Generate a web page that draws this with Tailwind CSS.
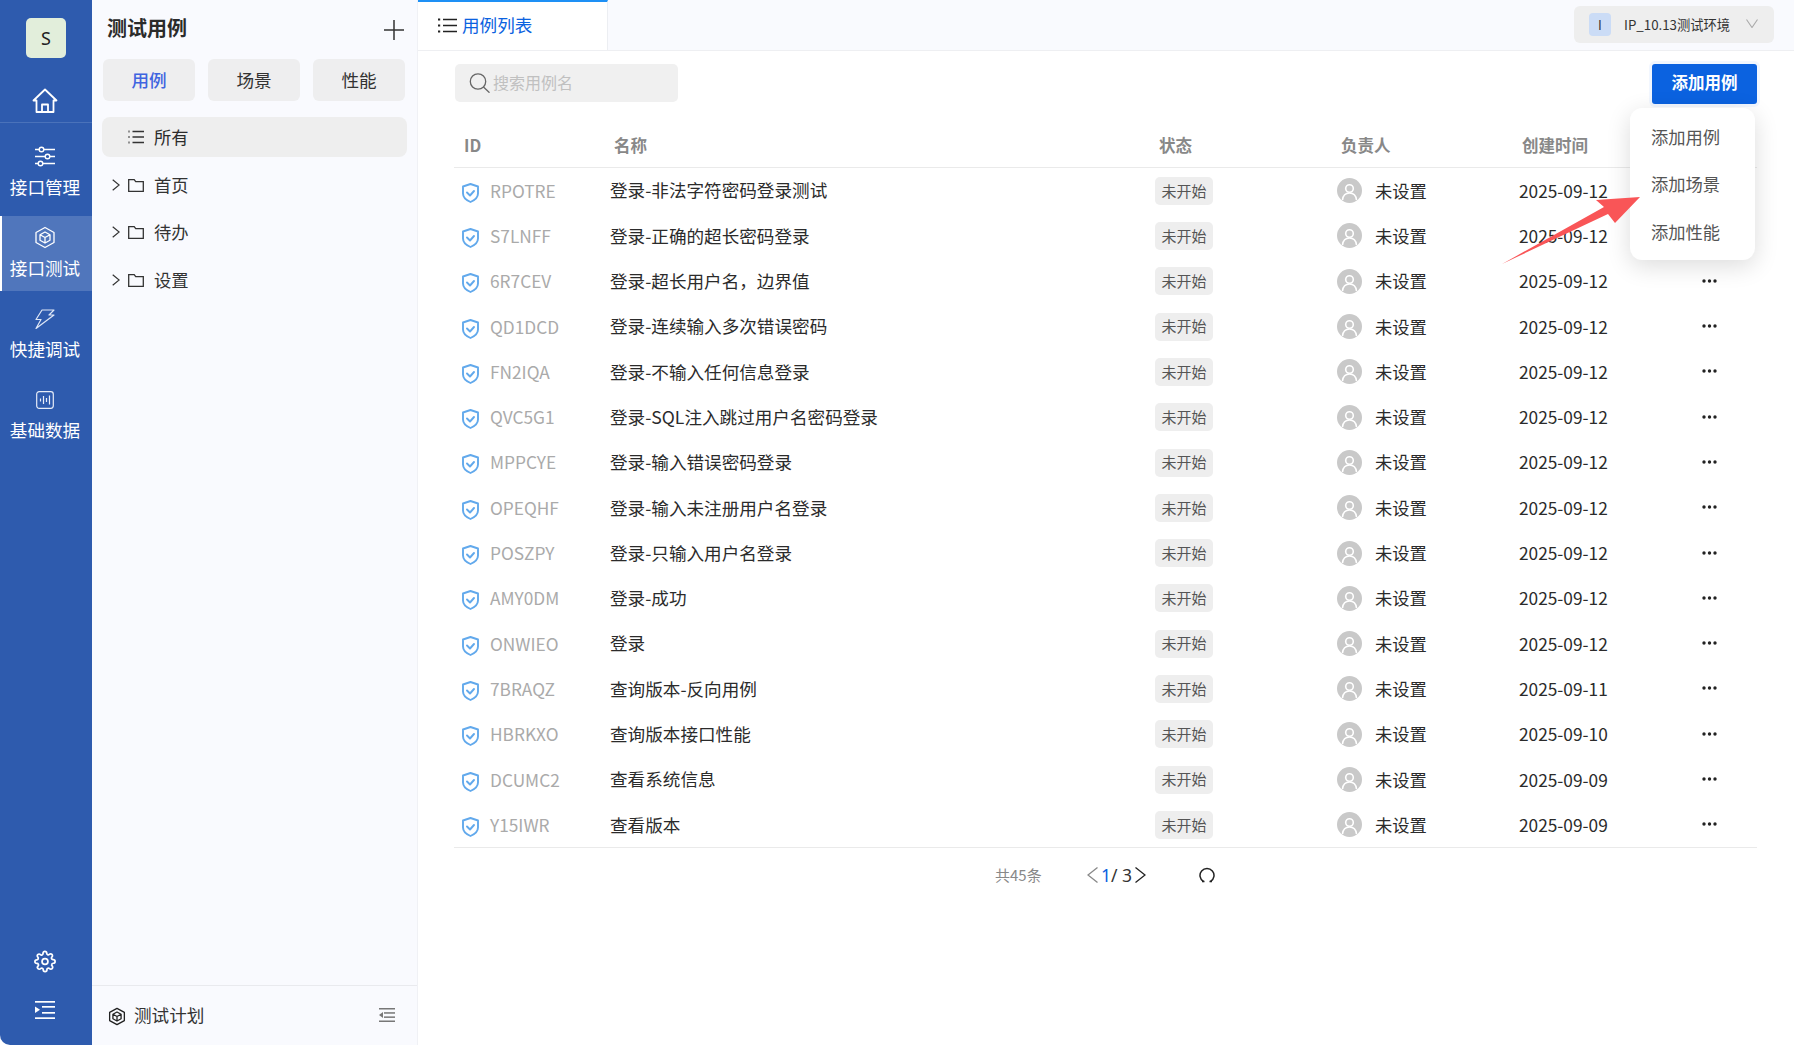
<!DOCTYPE html>
<html lang="zh-CN">
<head>
  <meta charset="UTF-8" />
  <title>测试用例</title>
  <script src="https://cdn.jsdelivr.net/npm/@tailwindcss/browser@4"></script>
</head>
<body class="bg-[#9a9a9a] h-[1045px] w-[1794px] overflow-hidden [font-family:'Noto_Sans_CJK_SC','Noto_Sans',sans-serif]">
  <div class="relative flex h-full w-full bg-white">

    <!-- left nav -->
    <aside class="w-[92px] h-full bg-[#2e5bae] rounded-bl-[10px] flex flex-col text-white text-[17.6px] shrink-0">
      <div class="pt-[18px] pb-[30px] flex justify-center">
        <div class="w-10 h-10 rounded-[5px] bg-[#e2eedb] text-[#222] flex items-center justify-center text-[18px] [font-family:'Noto_Sans',sans-serif]">S</div>
      </div>
      <div class="h-[34px] flex justify-center pr-[2px]">
        <svg class="w-[26px] h-[25px]" viewBox="0 0 26 25" fill="none" stroke="#fff" stroke-width="1.8" stroke-linejoin="round" stroke-linecap="round"><path d="M1.500 12.500 13 1.500l11.500 11h-3V24h-17V12.500z"/><path d="M10 24v-7.500h6V24"/></svg>
      </div>
      <div class="h-px bg-[#4a72ba]"></div>
      <div class="h-[93px] pt-[23px] pr-[2px] flex flex-col items-center">
        <svg class="w-[22px] h-[21px]" viewBox="0 0 22 21" fill="none" stroke="#fff" stroke-width="1.4"><path d="M1 3.500h4M10 3.500h11M1 10.500h10M16 10.500h5M1 17.500h3M9 17.500h12"/><circle cx="7.500" cy="3.500" r="2.300"/><circle cx="13.500" cy="10.500" r="2.300"/><circle cx="6.500" cy="17.500" r="2.300"/></svg>
        <span class="mt-[7px] leading-[26px]">接口管理</span>
      </div>
      <div class="h-[75px] ml-[2px] pr-[4px] bg-[#5076bc] flex flex-col items-center pt-[10px]">
        <svg class="w-[22px] h-[23px]" viewBox="0 0 22 23" fill="none" stroke="#fff" stroke-width="1.3" stroke-linejoin="round"><path d="M11 1.500 20 6.500v10l-9 5-9-5v-10z"/><path d="M11 6l5 2.700v5.600l-5 2.700-5-2.700V8.700zM6 8.700l5 2.800 5-2.800M11 11.500V17"/></svg>
        <span class="mt-[6px] leading-[26px]">接口测试</span>
      </div>
      <div class="h-[81px] pt-[18px] pr-[2px] flex flex-col items-center">
        <svg class="w-[20px] h-[20px]" viewBox="0 0 20 20" fill="none" stroke="#dfe7f6" stroke-width="1.2" stroke-linejoin="round"><path d="M7 1h12l-5 5h5L1 19.500 6 10.500H1z"/></svg>
        <span class="mt-[7px] leading-[26px]">快捷调试</span>
      </div>
      <div class="h-[81px] pt-[19px] pr-[2px] flex flex-col items-center">
        <svg class="w-[18px] h-[18px]" viewBox="0 0 18 18" fill="none" stroke="#e6ecf8" stroke-width="1.2"><rect x=".7" y=".7" width="16.600" height="16.600" rx="2.500"/><path d="M4.500 7.500v3M7.500 5v8M10.500 7v4M13.500 4.500v9"/></svg>
        <span class="mt-[8px] leading-[26px]">基础数据</span>
      </div>
      <div class="mt-auto flex flex-col items-center pb-[26px] pr-[2px]">
        <svg class="w-[22px] h-[23px]" viewBox="0 0 24 24" fill="none" stroke="#fff" stroke-width="1.9" stroke-linejoin="round"><circle cx="12" cy="12" r="3.200"/><path d="M19.400 15a1.650 1.650 0 0 0 .33 1.820l.06.06a2 2 0 1 1-2.830 2.830l-.06-.06a1.650 1.650 0 0 0-2.820 1.170V21a2 2 0 0 1-4 0v-.09a1.650 1.650 0 0 0-2.820-1.110l-.06.06a2 2 0 1 1-2.830-2.830l.06-.06a1.650 1.650 0 0 0-1.170-2.820H3a2 2 0 0 1 0-4h.09A1.650 1.650 0 0 0 4.200 7.330l-.06-.06a2 2 0 1 1 2.830-2.830l.06.06A1.650 1.650 0 0 0 9.850 3.330V3a2 2 0 0 1 4 0v.09a1.650 1.650 0 0 0 2.820 1.170l.06-.06a2 2 0 1 1 2.830 2.830l-.06.06a1.650 1.650 0 0 0 1.170 2.820H21a2 2 0 0 1 0 4h-.09A1.650 1.650 0 0 0 19.400 15z"/></svg>
        <svg class="w-[20px] h-[18px] mt-[28px]" viewBox="0 0 20 18" fill="#fff"><rect width="20" height="1.700"/><rect x="7" y="5" width="13" height="1.700"/><rect x="7" y="11" width="13" height="1.700"/><rect y="16.300" width="20" height="1.700"/><path d="M0 5.500 5 8.800 0 12z"/></svg>
      </div>
    </aside>
    <div class="absolute left-0 top-[216px] w-[2px] h-[75px] bg-white"></div>

    <!-- case tree -->
    <section class="w-[326px] h-full bg-[#f9fafe] border-r border-[#f0f1f5] flex flex-col shrink-0 text-[#333]">
      <div class="h-[59px] pl-[15px] pr-[13px] flex items-start justify-between">
        <h1 class="text-[20px] font-bold leading-[28px] mt-[14px] text-[#2b2b2b]">测试用例</h1>
        <svg class="w-[20px] h-[20px] mt-[20px]" viewBox="0 0 20 20" stroke="#333" stroke-width="1.500"><path d="M10 0v20M0 10h20"/></svg>
      </div>
      <div class="pl-[11px] flex gap-[13px] text-[17.6px]">
        <div class="w-[92px] h-[42px] rounded-[6px] bg-[#eeeeef] flex items-center justify-center text-[#3f65e0] font-medium">用例</div>
        <div class="w-[92px] h-[42px] rounded-[6px] bg-[#eeeeef] flex items-center justify-center">场景</div>
        <div class="w-[92px] h-[42px] rounded-[6px] bg-[#eeeeef] flex items-center justify-center">性能</div>
      </div>
      <nav class="mt-4 text-[17.3px]">
        <div class="ml-[10px] w-[305px] h-10 rounded-[8px] bg-[#eeeeee] flex items-center pl-[26px] gap-[10px]">
          <svg class="w-[16px] h-[14px]" viewBox="0 0 16 14" stroke="#333" stroke-width="1.300" fill="#333"><path d="M4.500 1.500H16M4.500 7H16M4.500 12.500H16"/><path d="M.5 1.500h1M.5 7h1M.5 12.500h1" stroke-width="1.800"/></svg>
          <span class="text-[#2b2b2b]">所有</span>
        </div>
        <div class="mt-[4px] ml-[20px] h-[47px] flex items-center gap-[8px]">
          <svg class="w-[8px] h-[12px]" viewBox="0 0 8 12" fill="none" stroke="#333" stroke-width="1.200"><path d="m.7.700 6.500 5.300L.7 11.300"/></svg>
          <svg class="w-[16px] h-[13px] mt-[1px]" viewBox="0 0 16 13" fill="none" stroke="#333" stroke-width="1.300"><path d="M.7.700h5.500l1.500 2h7.600v9.600H.7z"/></svg>
          <span class="ml-[2px]">首页</span>
        </div>
        <div class="ml-[20px] h-[47px] flex items-center gap-[8px]">
          <svg class="w-[8px] h-[12px]" viewBox="0 0 8 12" fill="none" stroke="#333" stroke-width="1.200"><path d="m.7.700 6.500 5.300L.7 11.300"/></svg>
          <svg class="w-[16px] h-[13px] mt-[1px]" viewBox="0 0 16 13" fill="none" stroke="#333" stroke-width="1.300"><path d="M.7.700h5.500l1.500 2h7.600v9.600H.7z"/></svg>
          <span class="ml-[2px]">待办</span>
        </div>
        <div class="mt-[1px] ml-[20px] h-[47px] flex items-center gap-[8px]">
          <svg class="w-[8px] h-[12px]" viewBox="0 0 8 12" fill="none" stroke="#333" stroke-width="1.200"><path d="m.7.700 6.500 5.300L.7 11.300"/></svg>
          <svg class="w-[16px] h-[13px] mt-[1px]" viewBox="0 0 16 13" fill="none" stroke="#333" stroke-width="1.300"><path d="M.7.700h5.500l1.500 2h7.600v9.600H.7z"/></svg>
          <span class="ml-[2px]">设置</span>
        </div>
      </nav>
      <div class="mt-auto h-[60px] border-t border-[#e9eaee] pl-[16px] pr-[22px] flex items-center justify-between">
        <div class="flex items-center gap-[8px]">
          <svg class="w-[18px] h-[19px] mt-[3px]" viewBox="0 0 22 23" fill="none" stroke="#222" stroke-width="1.600" stroke-linejoin="round"><path d="M11 1.500 20 6.500v10l-9 5-9-5v-10z"/><path d="M11 6l5 2.700v5.600l-5 2.700-5-2.700V8.700zM6 8.700l5 2.800 5-2.800M11 11.500V17"/></svg>
          <span class="text-[17.6px]">测试计划</span>
        </div>
        <svg class="w-[16px] h-[14px] -mt-[2px]" viewBox="0 0 16 14" fill="#777"><rect width="16" height="1.500"/><rect x="5" y="4.200" width="11" height="1.500"/><rect x="5" y="8.400" width="11" height="1.500"/><rect y="12.500" width="16" height="1.500"/><path d="M4 4 0 7l4 3z"/></svg>
      </div>
    </section>

    <!-- main -->
    <main class="flex-1 flex flex-col min-w-0">
      <header class="h-[51px] bg-[#f9fafe] border-b border-[#eeeff2] flex justify-between shrink-0">
        <div class="w-[190px] h-[50px] bg-white border-t-2 border-[#1e90f5] border-r border-r-[#eceef2] flex items-center pl-5 pb-[2px] gap-[5px] text-[#0b62e0] text-[17.6px]">
          <svg class="w-[19px] h-[15px]" viewBox="0 0 19 15" stroke="#222" stroke-width="1.500" fill="none"><path d="M5 1.500h14M5 7.500h14M5 13.500h14"/><path d="M0 1.500h2.200M0 7.500h2.200M0 13.500h2.200" stroke-width="2"/></svg>
          <span>用例列表</span>
        </div>
        <div class="w-[200px] h-[37px] mt-[6px] mr-[20px] rounded-[6px] bg-[#eeeeee] flex items-center pl-[15px] text-[#333]">
          <div class="w-[22px] h-[23px] rounded-[4px] bg-[#cbdcf6] flex items-center justify-center text-[13px] text-[#333]">I</div>
          <span class="ml-[13px] w-[122px] whitespace-nowrap text-[13.3px]">IP_10.13测试环境</span>
          <svg class="w-[12px] h-[9px] -mt-[2px]" viewBox="0 0 12 9" fill="none" stroke="#aaa" stroke-width="1.100"><path d="m.5.500 5.500 8 5.500-8"/></svg>
        </div>
      </header>

      <div class="pl-[36px] pr-[37px] flex-1 flex flex-col">
        <div class="flex justify-between pt-[13px] h-[52px] shrink-0">
          <div class="w-[223px] h-[38px] rounded-[5px] bg-[#f0f0f0] flex items-center pl-[14px] gap-[3px] ml-[1px] text-[16px] text-[#c0c0c0]">
            <svg class="w-[21px] h-[20px]" viewBox="0 0 21 20" fill="none" stroke="#666" stroke-width="1.300"><circle cx="9" cy="8.500" r="7.700"/><path d="m14.500 14 6 5.700"/></svg>
            <span class="-mt-[2px]">搜索用例名</span>
          </div>
          <button class="w-[105px] h-[40px] pb-[3px] rounded-[3px] bg-[#0b62e0] text-white text-[16.5px] font-bold shadow-[0_0_0_3px_#f2f7ff]">添加用例</button>
        </div>

        <div class="grid grid-cols-[156px_545px_182px_182px_184px_1fr] h-[65px] pt-[20px] items-center border-b border-[#eaeaea] text-[16.5px] font-bold text-[#888] shrink-0">
          <div class="pl-[10px] leading-[26px]">ID</div>
          <div class="pl-[4px]">名称</div>
          <div class="pl-[4px]">状态</div>
          <div class="pl-[4px]">负责人</div>
          <div class="pl-[3px]">创建时间</div>
          <div></div>
        </div>

        <div id="rows" class="border-b border-[#eaeaea]"></div>

        <div class="relative h-[54px] flex items-center text-[#333] [font-family:'Noto_Sans',sans-serif]">
          <span class="ml-[541px] w-[92px] text-[15px] text-[#888] [font-family:'Noto_Sans_CJK_SC',sans-serif]">共45条</span>
          <svg class="w-[11px] h-[16px]" viewBox="0 0 11 16" fill="none" stroke="#888" stroke-width="1.300"><path d="M10.500.5 1 8l9.500 7.500"/></svg>
          <span class="ml-[3px] text-[17.500px] text-[#0b62e0]">1</span>
          <span class="text-[17.500px]">/&nbsp;3</span>
          <svg class="w-[11px] h-[16px] ml-[3px]" viewBox="0 0 11 16" fill="none" stroke="#222" stroke-width="1.300"><path d="M.5.500 10 8 .5 15.500"/></svg>
          <svg class="w-[16px] h-[16px] ml-[53px]" viewBox="0 0 16 16" fill="none" stroke="#222" stroke-width="1.500"><path d="M4.500 14.500a7 7 0 1 1 7 0"/><path d="M3 14.500h2.500M10.500 14.500H13"/></svg>
        </div>
      </div>
    </main>

    <!-- add menu -->
    <div class="absolute left-[1630px] top-[108px] w-[125px] h-[152px] rounded-[12px] bg-white shadow-[0_6px_24px_rgba(0,0,0,0.14)] flex flex-col pt-[5px] pl-[21px] text-[17.3px] text-[#555]">
      <div class="h-[47.500px] flex items-center">添加用例</div>
      <div class="h-[47.500px] flex items-center">添加场景</div>
      <div class="h-[47.500px] flex items-center">添加性能</div>
    </div>

    <!-- annotation arrow -->
    <svg class="absolute left-0 top-0 w-[1794px] h-[1045px] pointer-events-none" viewBox="0 0 1794 1045">
      <path d="M1502 264 1604 207 1596 200 1640 197 1615 223 1608 214z" fill="#f95557"/>
    </svg>
  </div>

  <script>
    const cases = [
      ["RPOTRE", "登录-非法字符密码登录测试", "2025-09-12"],
      ["S7LNFF", "登录-正确的超长密码登录", "2025-09-12"],
      ["6R7CEV", "登录-超长用户名，边界值", "2025-09-12"],
      ["QD1DCD", "登录-连续输入多次错误密码", "2025-09-12"],
      ["FN2IQA", "登录-不输入任何信息登录", "2025-09-12"],
      ["QVC5G1", "登录-SQL注入跳过用户名密码登录", "2025-09-12"],
      ["MPPCYE", "登录-输入错误密码登录", "2025-09-12"],
      ["OPEQHF", "登录-输入未注册用户名登录", "2025-09-12"],
      ["POSZPY", "登录-只输入用户名登录", "2025-09-12"],
      ["AMY0DM", "登录-成功", "2025-09-12"],
      ["ONWIEO", "登录", "2025-09-12"],
      ["7BRAQZ", "查询版本-反向用例", "2025-09-11"],
      ["HBRKXO", "查询版本接口性能", "2025-09-10"],
      ["DCUMC2", "查看系统信息", "2025-09-09"],
      ["Y15IWR", "查看版本", "2025-09-09"]
    ];

    document.getElementById("rows").innerHTML = cases.map(c => `
      <div class="grid grid-cols-[156px_545px_182px_182px_184px_1fr] h-[45.300px] items-center text-[17.600px] text-[#2b2b2b]">
        <div class="pl-[8px] flex items-center gap-[11px]">
          <svg class="w-[17px] h-[20px] mt-[4px]" viewBox="0 0 17 20" fill="none" stroke="#62a9ec" stroke-width="1.900" stroke-linejoin="round" stroke-linecap="round"><path d="M8.500 1 16 3.500v7c0 4-3.500 6.800-7.500 8.500C4.500 17.300 1 14.500 1 10.500v-7z"/><path d="m5 9.500 3 3 4-4.500"/></svg>
          <span class="text-[#aaaaaa] text-[17.300px]">${c[0]}</span>
        </div>
        <div>${c[1]}</div>
        <div><span class="inline-flex items-center justify-center w-[58px] h-[28px] rounded-[5px] bg-[#eeeeee] text-[#555] text-[15px]">未开始</span></div>
        <div class="flex items-center gap-[13px]">
          <span class="w-[25px] h-[25px] rounded-full bg-[#c9c9c9] overflow-hidden">
            <svg class="w-[25px] h-[25px]" viewBox="0 0 25 25" fill="none" stroke="#fff" stroke-width="1.600"><circle cx="12.500" cy="10.500" r="3.800"/><path d="M5.500 22c.5-4.500 3-7 7-7s6.500 2.500 7 7"/></svg>
          </span>
          <span class="text-[17.300px]">未设置</span>
        </div>
        <div class="text-[17.300px]">${c[2]}</div>
        <div>
          <svg class="w-[15px] h-[4px] -ml-[1px] -mt-[1px]" viewBox="0 0 15 4" fill="#222"><circle cx="2" cy="2" r="1.700"/><circle cx="7.500" cy="2" r="1.700"/><circle cx="13" cy="2" r="1.700"/></svg>
        </div>
      </div>`).join("");
  </script>
</body>
</html>
